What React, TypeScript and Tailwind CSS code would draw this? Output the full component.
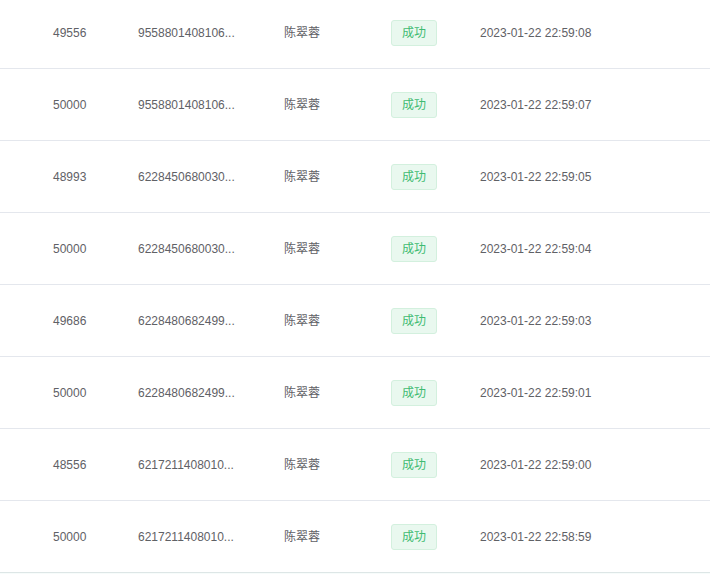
import React from 'react';

interface Row {
  amount: string;
  card: string;
  name: string;
  time: string;
}

const rows: Row[] = [
  { amount: '49556', card: '9558801408106...', name: '陈翠蓉', time: '2023-01-22 22:59:08' },
  { amount: '50000', card: '9558801408106...', name: '陈翠蓉', time: '2023-01-22 22:59:07' },
  { amount: '48993', card: '6228450680030...', name: '陈翠蓉', time: '2023-01-22 22:59:05' },
  { amount: '50000', card: '6228450680030...', name: '陈翠蓉', time: '2023-01-22 22:59:04' },
  { amount: '49686', card: '6228480682499...', name: '陈翠蓉', time: '2023-01-22 22:59:03' },
  { amount: '50000', card: '6228480682499...', name: '陈翠蓉', time: '2023-01-22 22:59:01' },
  { amount: '48556', card: '6217211408010...', name: '陈翠蓉', time: '2023-01-22 22:59:00' },
  { amount: '50000', card: '6217211408010...', name: '陈翠蓉', time: '2023-01-22 22:58:59' },
];

const App: React.FC = () => {
  return (
    <div
      className="w-[710px] h-[574px] overflow-hidden bg-white text-[12px] text-[#5f6166]"
      style={{ fontFamily: '"Liberation Sans", Arial, "Noto Sans CJK SC", sans-serif' }}
    >
      {/* table body, first row is cut off at the top */}
      <div className="-mt-[3px]">
        {rows.map((r, i) => (
          <div
            key={i}
            className={`h-[72px] grid grid-cols-[53px_85px_146px_107px_89px_1fr] items-center border-b ${
              i === rows.length - 1 ? 'border-[#dde6e6]' : 'border-[#e4e7ed]'
            }`}
          >
            <div />
            <div>{r.amount}</div>
            <div className="whitespace-nowrap">{r.card}</div>
            <div>{r.name}</div>
            <div>
              <span className="inline-flex items-center justify-center h-[26px] px-[10px] rounded-[3px] border border-[#d3f0de] bg-[#e9f8ef] text-[#3fbb72]">
                成功
              </span>
            </div>
            <div className="whitespace-nowrap">{r.time}</div>
          </div>
        ))}
        <div className="h-[10px] bg-[#f7fcfb]" />
      </div>
    </div>
  );
};

export default App;
